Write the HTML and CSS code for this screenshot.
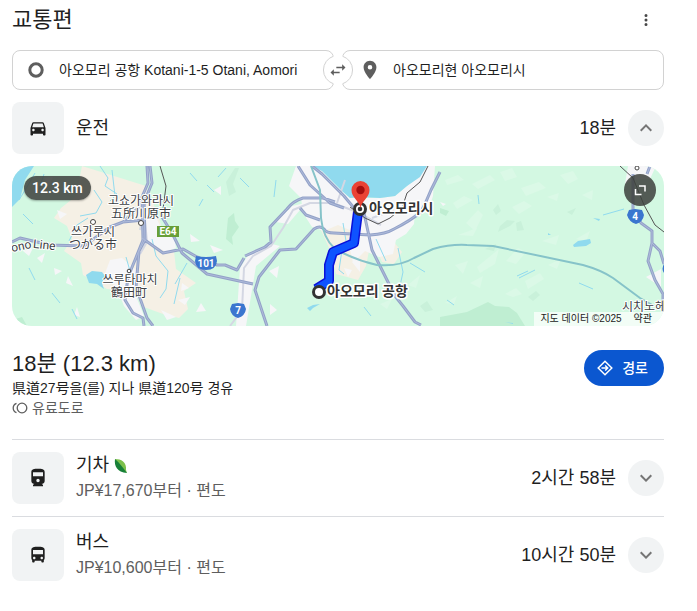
FILE: index.html
```html
<!DOCTYPE html>
<html lang="ko">
<head>
<meta charset="utf-8">
<meta name="viewport" content="width=device-width, initial-scale=1">
<title>교통편</title>
<link rel="stylesheet" href="styles.css">
</head>
<body>
<main class="transit">
  <header class="header">
    <h1 class="title">교통편</h1>
    <button class="menu" type="button" aria-label="메뉴">
      <svg width="18" height="18" viewBox="0 0 24 24"><path d="M12 8a2 2 0 1 0 0-4 2 2 0 0 0 0 4zm0 2a2 2 0 1 0 0 4 2 2 0 0 0 0-4zm0 6a2 2 0 1 0 0 4 2 2 0 0 0 0-4z"/></svg>
    </button>
  </header>

  <form class="places">
    <label class="place">
      <svg width="24" height="24" viewBox="0 0 24 24"><circle class="ring" cx="12" cy="12" r="6.2"/></svg>
      <input type="text" aria-label="출발지" value="아오모리 공항 Kotani-1-5 Otani, Aomori">
    </label>
    <label class="place">
      <svg width="24" height="24" viewBox="0 0 24 24"><path transform="translate(1 1) scale(.917)" d="M12 2C8.13 2 5 5.13 5 9c0 5.25 7 13 7 13s7-7.75 7-13c0-3.87-3.13-7-7-7zm0 9.500a2.500 2.500 0 0 1 0-5 2.500 2.500 0 0 1 0 5z"/></svg>
      <input type="text" aria-label="도착지" value="아오모리현 아오모리시">
    </label>
    <button class="swap" type="button" aria-label="출발지와 도착지 바꾸기">
      <svg width="32" height="32" viewBox="0 0 32 32">
        <circle cx="16" cy="16" r="15" fill="#fff"/>
        <path class="swap-edge" d="M11.500 2.200A14.500 14.500 0 0 0 11.500 29.800M20.500 2.200A14.500 14.500 0 0 1 20.500 29.800"/>
        <path transform="translate(6 6) scale(.833)" d="M6.990 11L3 15l3.990 4v-3H14v-2H6.990v-3zM21 9l-3.990-4v3H10v2h7.010v3L21 9z"/>
      </svg>
    </button>
  </form>

  <section>
    <div class="row">
      <span class="mode"><svg width="20" height="20" viewBox="0 0 24 24"><path d="M18.920 6.010C18.720 5.420 18.160 5 17.500 5h-11c-.66 0-1.210.42-1.420 1.010L3 12v8c0 .55.45 1 1 1h1c.55 0 1-.45 1-1v-1h12v1c0 .55.45 1 1 1h1c.55 0 1-.45 1-1v-8l-2.080-5.990zM6.500 16c-.83 0-1.500-.67-1.500-1.500S5.670 13 6.500 13s1.500.67 1.500 1.500S7.330 16 6.500 16zm11 0c-.83 0-1.500-.67-1.500-1.500s.67-1.500 1.500-1.500 1.500.67 1.500 1.500-.67 1.500-1.500 1.500zM5 11l1.500-4.500h11L19 11H5z"/></svg></span>
      <h2 class="name">운전</h2>
      <span class="time">18분</span>
      <button class="toggle" type="button" aria-label="접기" aria-expanded="true"><svg width="24" height="24" viewBox="0 0 24 24"><path d="M12 8l-6 6 1.410 1.410L12 10.830l4.590 4.580L18 14z"/></svg></button>
    </div>

    <div class="map">
      <svg class="canvas" viewBox="12 166 652 160" preserveAspectRatio="xMidYMid slice">
        <rect x="12" y="166" width="652" height="160" fill="#d3f8e2"/>
        <g fill="#bfeed2">
          <path d="M228 218l6-5 1 8 4 6-7 10 1 8-7-6z"/>
          <path d="M440 317l27-5 21-10 7 4 14 1 8 6 8 13h-85zM12 320l10-3 5 9H12zM440 208l9 3-3 5-6-3z"/>
          <path fill="#c9f1da" d="M420 306l7-5 6 9-8 2zM500 226l7-6 8 1-5 5-12 6zM516 223l5-2 3 9-7 1zM528 297l8-6 4 4-7 6zM493 210l5-6 3 7-5 4zM567 212l9-4-4 7zM485 249l11-5-2 7zM226 182l9-14h4l-6 16 3 8-7 4z"/>
        </g>
        <g fill="#f5f0e5">
          <path d="M82 166l-6 30-15 12-7 10 13 8 5 13-8 12 17 12 2 12 24 14 18 1 10-1 6 17 22 8 16 4 9-9-4-18 12-8-20-14-2-18-10-12-5-22-13-31z"/>
          <path d="M320 228l20-6 20 4 10 20-4 20-8 14-22-6-6-24z"/>
          <path d="M382 262l-6-14 18-6 8 10-8 12z"/>
          <path d="M306 178l12 2 4 10-14 2z"/>
        </g>
        <g fill="#f6f6f8">
          <path d="M296 166h16l10 5 20 20 8 7 30 0 15-2 12-10 20-20h8l-2 30-4 12-14 4-1 12-8 10-10 6-3 14-14 3-14-6-12 12-3-14 2-18-14-6-14 6-12-4-9-14-2-15-12-12z"/>
          <path d="M142 214l10-6 8 18 14 10 2 12-10 4-24-14zM110 260l12-2 14 12 0 26 8 20-8 4-12-14-8-20-12-10zM240 268l10-16 22-8 8 2-24 20-10 60h-10zM292 206l18-4-10 8-12 14-12-2zM628 166h28l-6 13-16 1-9 4z"/>
          <path d="M23 251l10-3-4 8zM37 258l8-5-3 10zM54 268l8 3-7 4zM68 276l5 10-7-3zM44 178l9-1-4 9zM57 210l10 4-7 5zM182 283l7 5-8 3zM178 300l12-3-5 8zM196 312l5-9 5 8zM190 234l10 7-9 1zM210 245l13 5-9 3zM77 307l3 10-6-2zM161 310l15 7-9 3zM214 190l7-4v9zM269 271l10-5-2 12zM344 268l8 2-4 7zM440 202l6 2-3 2zM646 277l15-8v18zM270 304l7 6-7 5zM352 262l8-4 0 14z"/>
        </g>
        <g fill="#dbf9e7">
          <path d="M445 180l13-5 6 5-17 5zM472 184l18-9 5 5-17 9zM500 172l12-4 5 9-12 4zM453 203l11-7 9 4-16 9zM521 188l18-6 7 6-20 8zM466 223l12-13 5 5-8 16zM512 207l12-6 8 5-13 8zM458 235l19-7-4 8zM477 267l22-18-4 15-15 9zM506 261l12-13 8 4-10 12zM455 265l13-4-5 13zM525 281l15-8 4 6-16 10zM548 265l13-6-4 10zM505 294l11-6 6 6-9 3zM470 283l13-7-3 12zM560 175l13-4 5 8-10 5zM547 197l12-4-2 8zM582 195l11-5-1 10zM408 285l12-10-4 13zM380 304l12-5-5 10zM542 241l17-6-3 10zM576 239l14-8-4 11zM445 303l12-7-3 8z"/>
        </g>
        <g fill="#90daee">
          <path d="M312 166l10 5 20 20 8 7 10-1 20 1 15-2 12-10 13-9 7-11zM12 166h22l-9 14-5 19-8 8zM86 275l6-4 10 1 3 4-3 7 2 6-7-5-8-1z"/>
          <path d="M573 245l5-4 12-2 1 4-5 3-12 1zM593 218l7 1-1 2zM307 308l6-3 7-1-7 4-3 3zM505 322l8 1v1zM548 233l3 2h-3z"/>
        </g>
        <g class="stream">
          <path d="M100 166l8 12-3 8 12 8-7 7M112 170l3 26M94 190l8 12-6 11-16 3M88 218l-11 7-8 16M126 257l8 28M342 250l-3 20 5 4M398 248l5 24-3 14M410 263l15 9M343 223l3 18M376 239l10 22M152 239l4 17 12 15-2 18-6 9M180 278l-6 26M187 263l-12 21"/>
          <path d="M35 173l-8 14-8 13M44 174l-5 16M23 214l10 10M29 268l6 12M52 293l8 10M72 309l5 10M190 173l7 8M207 185l7 7M203 199l-4 7M218 177l8-9M240 178l9 9M276 180l-2 17M478 195l1 9M535 270l-16 8M603 215l21-6M517 276l11-5M447 300l7 5M579 283l14 6M364 307l7 9"/>
        </g>
        <g class="road-grey">
          <path d="M230 326l12-16 2-42 9-12 18-10 12-18 10-18 17-7h23l24 9M345 180l-8 23M145 220l2 22-7 12M148 190l-8 40M357 212l24 13M372 218l22-8"/>
        </g>
        <g class="road-edge">
          <path d="M147 166l1 17-6 14 1 43-8 20-7 17-3 23 8 13 10 5 1 8M150 166l2 17-8 20 1 37-6 11-3 36 11 31 6 8M144 220l-21 2-13 5-26 19-34-1-30-7-8 4M123 222l16-15M142 238l21 15 20-4 14 8 20 8h8l12 5 7-12M162 217l10 16 10 20 25 21 46 10"/>
          <path d="M267 326l-12-36 4-13 21-27 16-1 18-20q6-4 10 0 2 4 10 4l36 2q16-1 24-6 16-8 27-17 6-12 10-22l9-18M245 256l20-9 6-5-1-15 17-18q6-8 16-11l20 0 12 4M300 208l6 7 14 5M298 166l12 19 20 18 14 5M312 166l10 8 22 22 10 12M364 213l8 37 7 14 16 32 8 10 12 16 6 3M633 174l0 36 8 13 11 8v12l-4 18 7 19 8 14v18M652 243l8 8 4 13M650 166l-3 8"/>
        </g>
        <g class="road">
          <path d="M147 166l1 17-6 14 1 43-8 20-7 17-3 23 8 13 10 5 1 8M150 166l2 17-8 20 1 37-6 11-3 36 11 31 6 8M144 220l-21 2-13 5-26 19-34-1-30-7-8 4M123 222l16-15M142 238l21 15 20-4 14 8 20 8h8l12 5 7-12M162 217l10 16 10 20 25 21 46 10"/>
          <path d="M267 326l-12-36 4-13 21-27 16-1 18-20q6-4 10 0 2 4 10 4l36 2q16-1 24-6 16-8 27-17 6-12 10-22l9-18M245 256l20-9 6-5-1-15 17-18q6-8 16-11l20 0 12 4M300 208l6 7 14 5M298 166l12 19 20 18 14 5M312 166l10 8 22 22 10 12M364 213l8 37 7 14 16 32 8 10 12 16 6 3M633 174l0 36 8 13 11 8v12l-4 18 7 19 8 14v18M652 243l8 8 4 13M650 166l-3 8"/>
        </g>
        <path class="tollway" d="M311 166l9 24 1 28q2 20 14 31 20 11 42 16 22 2 37-7l19-9q18-5 34-4l26 1 90 19q18 5 30 13l27 20 14 8"/>
        <path class="rail" d="M160 166l6 20-4 31M350 207l15 11 13 6 12-6 12-10 5-15 13-11 8-16M620 166l13 12 11 27 11 20 9 7"/>
        <path class="route-edge" d="M358 212l-4 31-21 9-4 13v16l-13 8"/>
        <path class="route" d="M358 212l-4 31-21 9-4 13v16l-13 8"/>
        <g class="town-dot">
          <circle cx="93" cy="222" r="2.500"/><circle cx="141" cy="223" r="2.500"/><circle cx="129" cy="271" r="1.800"/><circle cx="637" cy="168" r="2"/>
        </g>
        <g class="stop">
          <circle cx="360" cy="209" r="5.500"/><circle cx="319" cy="292" r="5.500"/>
        </g>
        <circle cx="360" cy="209" r="2.300" fill="#333"/>
        <path fill="#ea4335" d="M360.500 181a9 9 0 0 1 9 9c0 8-7.500 10-9 18-1.500-8-9-10-9-18a9 9 0 0 1 9-9z"/>
        <circle cx="360.500" cy="190" r="4.200" fill="#a50e0e"/>
        <rect x="157" y="226" width="22" height="11" fill="#689f38"/>
        <path fill="#3b76cf" d="M196 256q10 2 20 0l1 5q-1 9-11 9t-11-9zM232 304l6-1 6 1 2 5q-1 7-8 9-7-2-8-9zM629 210l6-1 7 1 2 5q-1 7-8 9-7-2-9-9zM664 264q-3 5 0 9z"/>
        <g class="shield">
          <text x="168" y="235">E64</text><text x="206" y="267">101</text><text x="238" y="314">7</text><text x="635" y="220">4</text>
        </g>
        <g class="town">
          <text x="141" y="205">고쇼가와라시</text><text x="141" y="218">五所川原市</text>
          <text x="93" y="236">쓰가루시</text><text x="93" y="249">つがる市</text>
          <text x="130" y="284">쓰루타마치</text><text x="129" y="297">鶴田町</text>
          <text x="644" y="311">시치노헤</text>
          <text x="22" y="250" transform="rotate(-12 22 250)">ono</text>
          <text x="44" y="249" transform="rotate(6 44 249)">Line</text>
        </g>
        <g class="stop-name">
          <text x="369" y="213">아오모리시</text><text x="327" y="296">아오모리 공항</text>
        </g>
      </svg>
      <span class="distance">12.3 km</span>
      <button class="expand" type="button" aria-label="지도 확대"><svg width="16" height="16" viewBox="0 0 16 16"><path d="M7 4h6v5.500M3.500 7v5.500h6"/></svg></button>
      <div class="credit"><span>지도 데이터 ©2025</span><a href="#">약관</a></div>
    </div>

    <div class="summary">
      <div class="via">
        <h3 class="total">18분 (12.3 km)</h3>
        <p>県道27号을(를) 지나 県道120号 경유</p>
        <p class="toll"><svg width="16" height="16" viewBox="0 0 16 16"><circle cx="10" cy="8" r="4.800"/><path d="M4.500 3.300a5 5 0 0 0 0 9.400"/></svg>유료도로</p>
      </div>
      <button class="go" type="button">
        <svg width="16" height="16" viewBox="0 0 16 16"><path d="M8 1.200L14.800 8 8 14.800 1.200 8zM4.500 8h6M8.200 5.500L10.700 8l-2.500 2.500"/></svg>경로
      </button>
    </div>
  </section>

  <section class="option">
    <div class="row">
      <span class="mode"><svg width="20" height="20" viewBox="0 0 24 24"><path d="M4 15.500C4 17.430 5.570 19 7.500 19L6 20.500v1.500h12v-1.500L16.500 19c1.930 0 3.500-1.570 3.500-3.500V5c0-3.500-3.580-4-8-4s-8 .5-8 4v10.500zm8 1.500c-1.100 0-2-.9-2-2s.9-2 2-2 2 .9 2 2-.9 2-2 2zm6-7H6V5h12v5z"/></svg></span>
      <div class="name">
        <h2>기차 <svg class="leaf" width="14" height="14" viewBox="0 0 14 14"><path fill="#7cc04b" d="M1 0c6 0 12 3 11 11l1 3C8 11 3 8 1 0z"/><path fill="#188038" d="M1 0C0 7 3 13 13 14 9 9 6 4 1 0z"/></svg></h2>
        <p>JP¥17,670부터 · 편도</p>
      </div>
      <span class="time">2시간 58분</span>
      <button class="toggle" type="button" aria-label="펼치기" aria-expanded="false"><svg width="24" height="24" viewBox="0 0 24 24"><path d="M16.590 8.590L12 13.170 7.410 8.590 6 10l6 6 6-6z"/></svg></button>
    </div>
  </section>

  <section class="option">
    <div class="row">
      <span class="mode"><svg width="20" height="20" viewBox="0 0 24 24"><path d="M4 16c0 .88.39 1.670 1 2.220V20c0 .55.45 1 1 1h1c.55 0 1-.45 1-1v-1h8v1c0 .55.45 1 1 1h1c.55 0 1-.45 1-1v-1.780c.61-.55 1-1.340 1-2.220V6c0-3.500-3.580-4-8-4s-8 .5-8 4v10zm3.500 1c-.83 0-1.500-.67-1.500-1.500S6.670 14 7.500 14s1.500.67 1.500 1.500S8.330 17 7.500 17zm9 0c-.83 0-1.500-.67-1.500-1.500s.67-1.500 1.500-1.500 1.500.67 1.500 1.500-.67 1.500-1.500 1.500zm1.500-6H6V6h12v5z"/></svg></span>
      <div class="name">
        <h2>버스</h2>
        <p>JP¥10,600부터 · 편도</p>
      </div>
      <span class="time">10시간 50분</span>
      <button class="toggle" type="button" aria-label="펼치기" aria-expanded="false"><svg width="24" height="24" viewBox="0 0 24 24"><path d="M16.590 8.590L12 13.170 7.410 8.590 6 10l6 6 6-6z"/></svg></button>
    </div>
  </section>
</main>
</body>
</html>
```
FILE: styles.css
```css
* { box-sizing: border-box; }

body {
  margin: 0;
  background: #fff;
  color: #1f1f1f;
  font-family: "Liberation Sans", "Noto Sans CJK KR", sans-serif;
  font-size: 14px;
  line-height: 20px;
}

h1, h2, h3, p { margin: 0; font-weight: 400; }

button {
  border: 0;
  padding: 0;
  background: none;
  font: inherit;
  cursor: pointer;
}

svg { display: block; flex: none; }

.transit { padding: 0 33px 12px 12px; }

.header {
  display: flex;
  align-items: center;
  justify-content: space-between;
  height: 40px;
}

.title { font-size: 22px; line-height: 40px; }

.menu {
  display: grid;
  place-items: center;
  width: 36px;
  height: 36px;
  fill: #474747;
}

.places {
  position: relative;
  display: grid;
  grid-template-columns: 1fr 1fr;
  gap: 8px;
  margin: 10px 0 12px;
}

.place {
  display: flex;
  align-items: center;
  gap: 11px;
  height: 40px;
  padding: 0 24px 0 11px;
  border: 1px solid #d2d2d2;
  border-radius: 8px;
  fill: #5e5e5e;
}

.place + .place { padding-left: 15px; }

.ring { fill: none; stroke: #5e5e5e; stroke-width: 3; }

.place input {
  flex: 1;
  min-width: 0;
  padding: 0;
  border: 0;
  outline: 0;
  background: none;
  color: inherit;
  font: inherit;
}

.swap {
  position: absolute;
  top: 50%;
  left: 50%;
  transform: translate(-50%, -50%);
  fill: #5e5e5e;
}

.swap-edge { fill: none; stroke: #d2d2d2; }

.row {
  display: flex;
  align-items: center;
  gap: 12px;
}

.mode {
  display: grid;
  place-items: center;
  width: 52px;
  height: 52px;
  border-radius: 8px;
  background: #f1f3f4;
  fill: #1f1f1f;
}

.name { flex: 1; font-size: 18px; line-height: 26px; }
.name h2 { font-size: 18px; }
.name p { color: #5e5e5e; font-size: 16px; }

.leaf { display: inline-block; vertical-align: -2px; }

.time { font-size: 18px; line-height: 26px; }

.toggle {
  display: grid;
  place-items: center;
  width: 36px;
  height: 36px;
  border-radius: 50%;
  background: #f1f3f4;
  fill: #757575;
}

.map {
  position: relative;
  height: 160px;
  margin: 12px 0 24px;
  overflow: hidden;
  border-radius: 20px;
}

.canvas { width: 100%; height: 100%; }

.canvas path { stroke-linejoin: round; }
.stream { fill: none; stroke: #90daee; stroke-width: 1; }
.road-grey { fill: none; stroke: #d4d7e3; stroke-width: 2; }
.road-edge { fill: none; stroke: #93a2c8; stroke-width: 3; }
.road { fill: none; stroke: #aebada; stroke-width: 1; }
.tollway { fill: none; stroke: #86c3c9; stroke-width: 2; }
.rail { fill: none; stroke: #555; stroke-width: 1; }
.route-edge { fill: none; stroke: #0a11d8; stroke-width: 10; }
.route { fill: none; stroke: #0f53ff; stroke-width: 7; }
.town-dot { fill: #fff; stroke: #444; stroke-width: 1; }
.stop { fill: #fff; stroke: #333; stroke-width: 3; }

.canvas text {
  font-family: Roboto, "Noto Sans CJK KR", sans-serif;
  paint-order: stroke;
  stroke-linejoin: round;
}

.town text { fill: #3c4043; stroke: #fff; stroke-width: 2; font-size: 12px; text-anchor: middle; }
.stop-name text { fill: #333; stroke: #fff; stroke-width: 3; font-size: 14px; font-weight: 700; }
.shield text { fill: #fff; font-size: 10px; font-weight: 700; text-anchor: middle; }

.distance {
  position: absolute;
  top: 10px;
  left: 12px;
  padding: 2px 8px;
  border-radius: 12px;
  background: rgba(60, 64, 60, .85);
  box-shadow: 0 1px 2px rgba(0, 0, 0, .3);
  color: #fff;
  font-family: Roboto, sans-serif;
  font-weight: 500;
}

.expand {
  position: absolute;
  top: 8px;
  right: 8px;
  display: grid;
  place-items: center;
  width: 32px;
  height: 32px;
  border-radius: 50%;
  background: rgba(60, 64, 60, .85);
}

.expand path { fill: none; stroke: #fff; stroke-width: 1.5; stroke-linejoin: miter; }

.credit {
  position: absolute;
  right: 0;
  bottom: 0;
  display: flex;
  gap: 12px;
  padding: 0 12px 0 6px;
  background: rgba(255, 255, 255, .7);
  color: #222;
  font-size: 10px;
  line-height: 14px;
}

.credit a { color: inherit; text-decoration: none; }

.summary {
  display: flex;
  align-items: flex-start;
  justify-content: space-between;
  padding-bottom: 21px;
}

.total { font-size: 22px; line-height: 28px; }

.toll {
  display: flex;
  align-items: center;
  gap: 4px;
  color: #5e5e5e;
}

.toll svg { fill: none; stroke: #5e5e5e; stroke-width: 1.3; }

.go {
  display: flex;
  align-items: center;
  gap: 9px;
  height: 36px;
  padding: 0 16px 0 13px;
  border-radius: 18px;
  background: #0b57d0;
  color: #fff;
  font-family: Roboto, "Noto Sans CJK KR", sans-serif;
  font-weight: 500;
}

.go svg { fill: none; stroke: #fff; stroke-width: 1.5; }

.option {
  padding: 12px 0;
  border-top: 1px solid #dadce0;
}
```
